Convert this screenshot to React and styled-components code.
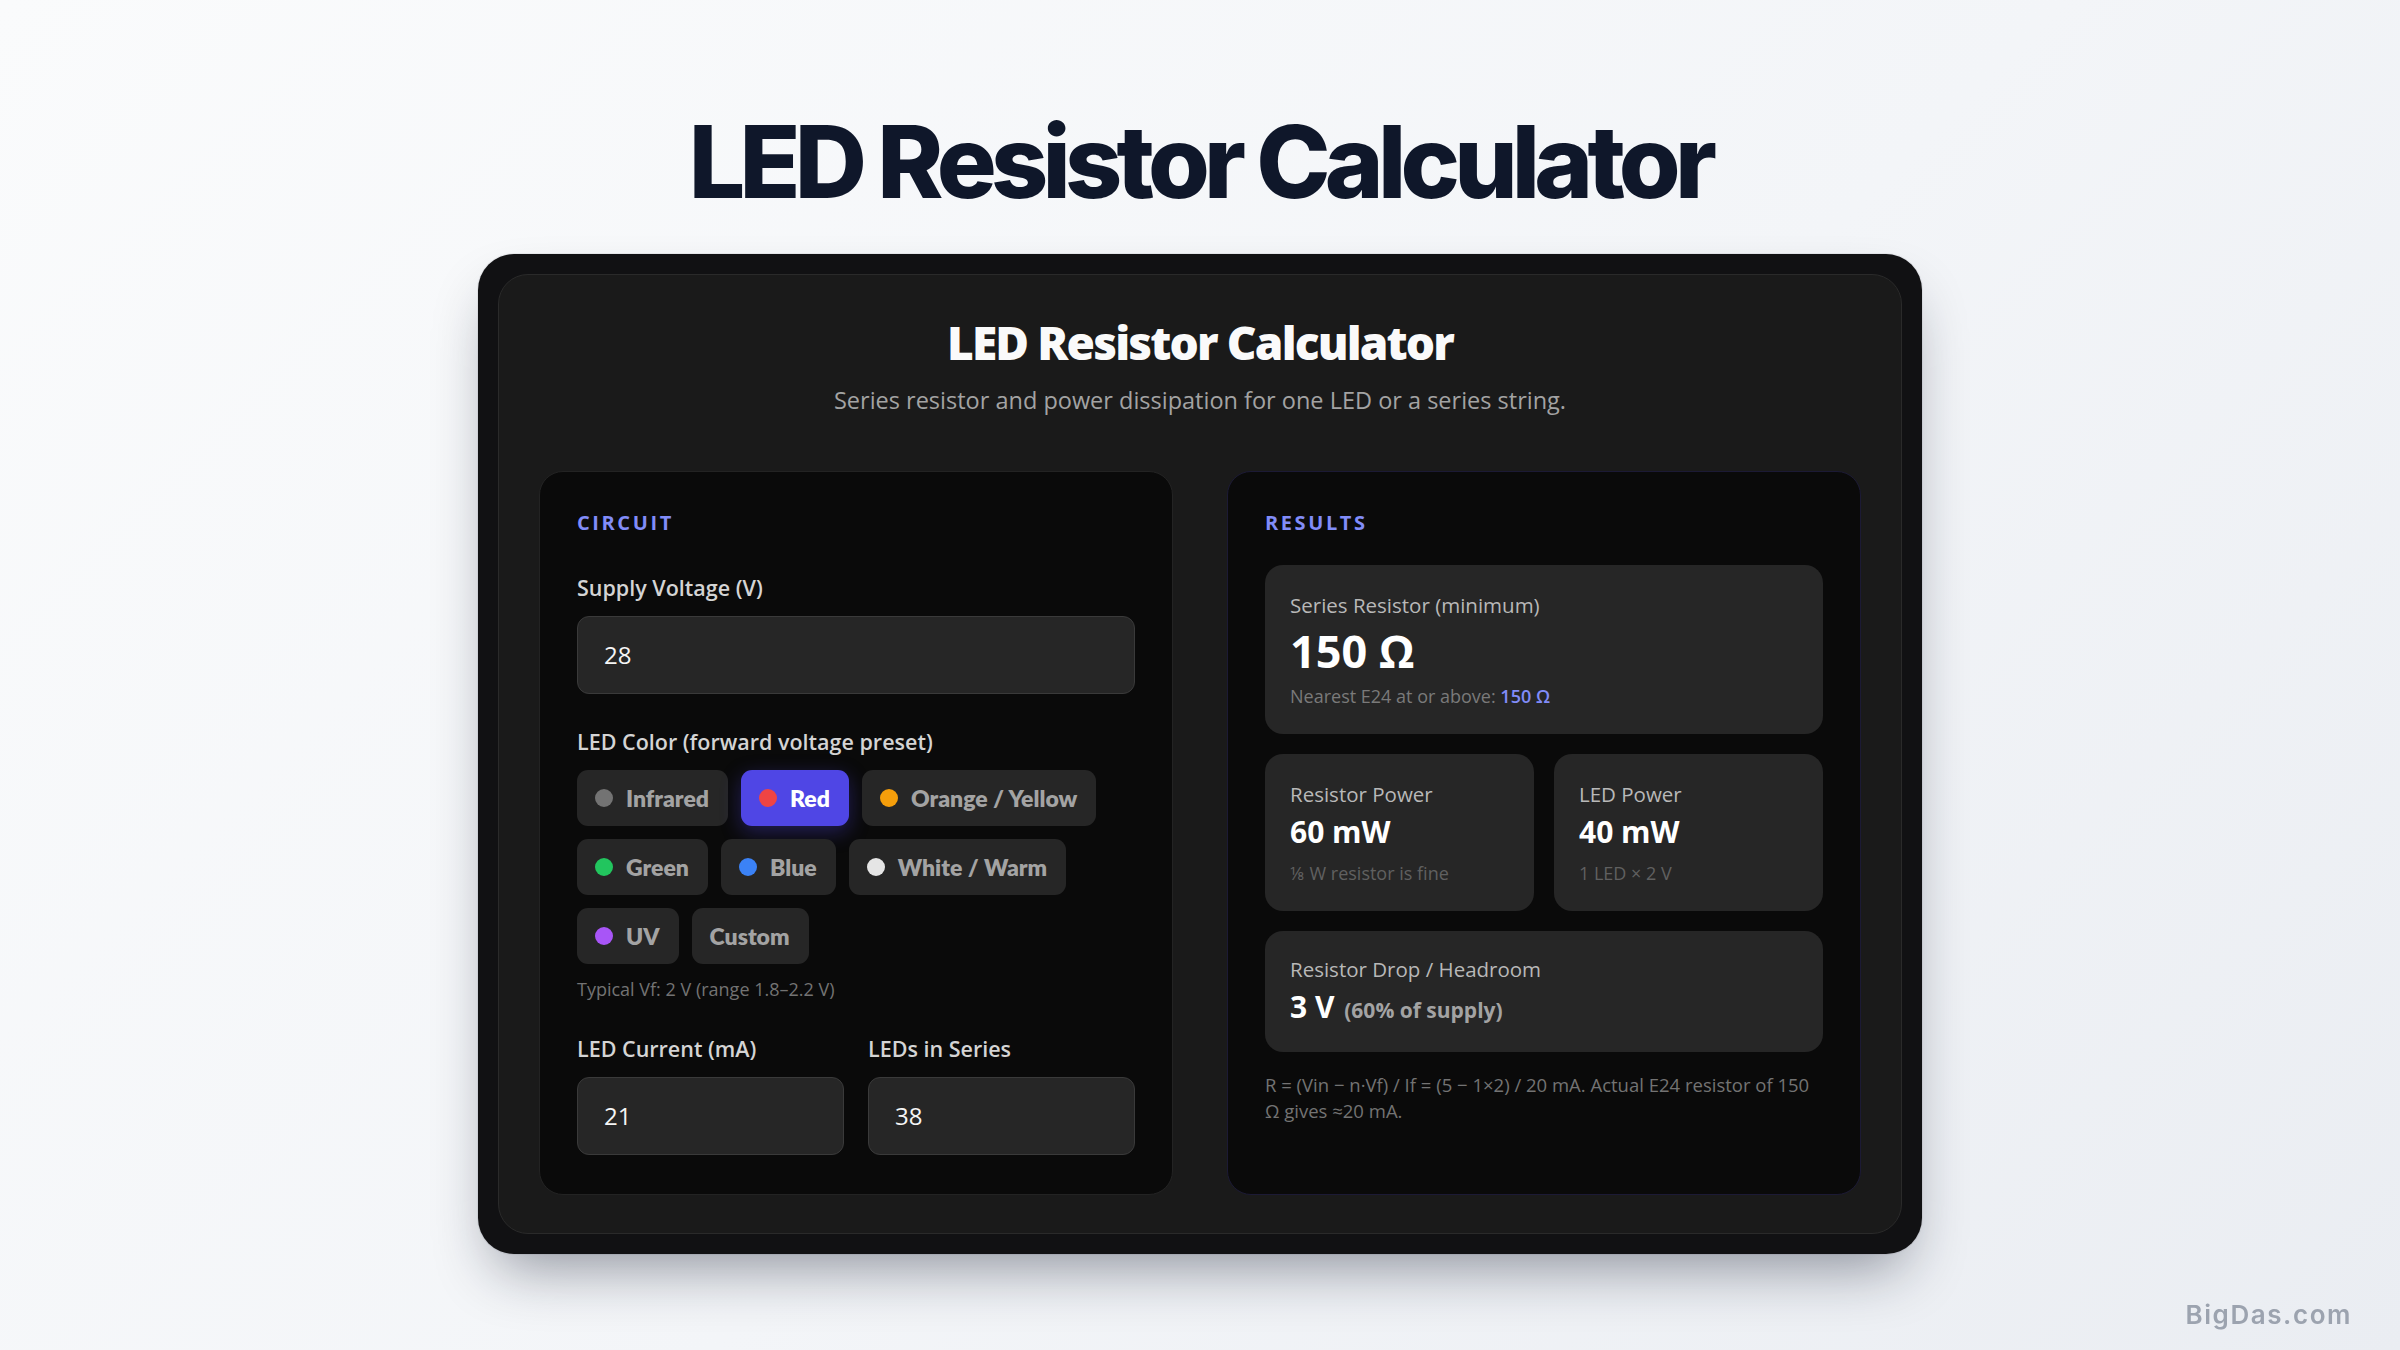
import React from "react";
import styled, { createGlobalStyle } from "styled-components";

const GlobalStyle = createGlobalStyle`
  * { box-sizing: border-box; }
  html, body { margin: 0; padding: 0; }
  body {
    min-height: 100vh;
    background: linear-gradient(135deg, #fafbfc 0%, #f3f5f8 55%, #eaedf2 100%);
    font-family: "Open Sans", "Noto Sans", sans-serif;
  }
`;

const colors = [
  { name: "Infrared", dot: "#737373" },
  { name: "Red", dot: "#ef4444", active: true },
  { name: "Orange / Yellow", dot: "#f59e0b" },
  { name: "Green", dot: "#22c55e" },
  { name: "Blue", dot: "#3b82f6" },
  { name: "White / Warm", dot: "#e5e5e5" },
  { name: "UV", dot: "#a855f7" },
  { name: "Custom" },
];

function App() {
  return (
    <Page>
      <GlobalStyle />
      <PageTitle>LED Resistor Calculator</PageTitle>

      <Frame>
        <Card>
          {/* header */}
          <CardHeader>
            <CardTitle>LED Resistor Calculator</CardTitle>
            <Subtitle>
              Series resistor and power dissipation for one LED or a series string.
            </Subtitle>
          </CardHeader>

          <Columns>
            {/* inputs */}
            <Panel>
              <SectionLabel>Circuit</SectionLabel>
              <Form>
                <Field>
                  <Label>Supply Voltage (V)</Label>
                  <Input defaultValue="28" />
                </Field>

                <Field>
                  <Label>LED Color (forward voltage preset)</Label>
                  <ChipWrap>
                    {colors.map((c) => (
                      <Chip key={c.name} $active={c.active}>
                        {c.dot && <Dot $color={c.dot} />}
                        {c.name}
                      </Chip>
                    ))}
                  </ChipWrap>
                  <Hint>Typical Vf: 2 V (range 1.8–2.2 V)</Hint>
                </Field>

                <FieldRow>
                  <Field>
                    <Label>LED Current (mA)</Label>
                    <Input defaultValue="21" />
                  </Field>
                  <Field>
                    <Label>LEDs in Series</Label>
                    <Input defaultValue="38" />
                  </Field>
                </FieldRow>
              </Form>
            </Panel>

            {/* results */}
            <Panel $accent>
              <SectionLabel>Results</SectionLabel>
              <ResultStack>
                <ResultCard>
                  <ResultLabel>Series Resistor (minimum)</ResultLabel>
                  <BigValue>150 Ω</BigValue>
                  <ResultSub $gap={10}>
                    Nearest E24 at or above: <Accent>150 Ω</Accent>
                  </ResultSub>
                </ResultCard>

                <ResultGrid>
                  <ResultCard>
                    <ResultLabel>Resistor Power</ResultLabel>
                    <Value>60 mW</Value>
                    <ResultSub $gap={12} $dim>
                      ⅛ W resistor is fine
                    </ResultSub>
                  </ResultCard>
                  <ResultCard>
                    <ResultLabel>LED Power</ResultLabel>
                    <Value>40 mW</Value>
                    <ResultSub $gap={12} $dim>
                      1 LED × 2 V
                    </ResultSub>
                  </ResultCard>
                </ResultGrid>

                <ResultCard $tall>
                  <ResultLabel>Resistor Drop / Headroom</ResultLabel>
                  <Value>
                    3 V <Small>(60% of supply)</Small>
                  </Value>
                </ResultCard>

                <Footnote>
                  R = (Vin − n·Vf) / If = (5 − 1×2) / 20 mA. Actual E24 resistor
                  of 150 Ω gives ≈20 mA.
                </Footnote>
              </ResultStack>
            </Panel>
          </Columns>
        </Card>
      </Frame>

      <Watermark>BigDas.com</Watermark>
    </Page>
  );
}

export default App;

const Page = styled.div`
  min-height: 100vh;
  display: flex;
  flex-direction: column;
  align-items: center;
  padding-top: 107px;
`;

const PageTitle = styled.h1`
  margin: 0 0 37px;
  font-family: Inter, "Open Sans", sans-serif;
  font-size: 100px;
  font-weight: 800;
  line-height: 1.1;
  letter-spacing: -0.058em;
  color: #0f172a;
`;

const Frame = styled.div`
  width: 1444px;
  padding: 20px;
  border-radius: 36px;
  background: #111113;
  box-shadow: 0 30px 60px -18px rgba(15, 23, 42, 0.45),
    0 0 0 1px rgba(15, 23, 42, 0.06);
`;

const Card = styled.div`
  padding: 40px 40px 38px;
  border-radius: 30px;
  background: #1a1a1a;
  border: 1px solid #2a2a2a;
`;

const CardHeader = styled.div`
  text-align: center;
  margin-bottom: 54px;
`;

const CardTitle = styled.h2`
  margin: 0;
  font-size: 46px;
  font-weight: 800;
  line-height: 1.2;
  letter-spacing: -0.04em;
  color: #fafafa;
`;

const Subtitle = styled.p`
  margin: 14px 0 0;
  font-size: 23.5px;
  line-height: 1.4;
  color: #a3a3a3;
`;

const Columns = styled.div`
  display: grid;
  grid-template-columns: 1fr 1fr;
  gap: 54px;
`;

const Panel = styled.section`
  padding: 39px 37px 39px;
  border-radius: 24px;
  background: #0a0a0a;
  border: 1px solid ${(p) => (p.$accent ? "#1c1a35" : "#232323")};
`;

const SectionLabel = styled.div`
  margin-bottom: 30px;
  font-size: 20px;
  font-weight: 700;
  line-height: 1.2;
  letter-spacing: 0.13em;
  text-transform: uppercase;
  color: #818cf8;
`;

const Form = styled.div`
  display: flex;
  flex-direction: column;
  gap: 35px;
  padding-top: 10px;
`;

const Field = styled.div`
  display: flex;
  flex-direction: column;
  min-width: 0;
`;

const FieldRow = styled.div`
  display: grid;
  grid-template-columns: 1fr 1fr;
  gap: 24px;
`;

const Label = styled.label`
  margin-bottom: 15px;
  font-size: 21.5px;
  font-weight: 600;
  line-height: 1.2;
  color: #d4d4d4;
`;

const Input = styled.input`
  width: 100%;
  height: 78px;
  padding: 0 26px;
  border-radius: 12px;
  border: 1.5px solid #3a3a3a;
  background: #262626;
  color: #f5f5f5;
  font-family: "Open Sans", sans-serif;
  font-size: 24px;
  outline: none;
`;

const ChipWrap = styled.div`
  display: flex;
  flex-wrap: wrap;
  gap: 13px 13px;
`;

const Chip = styled.button`
  display: inline-flex;
  align-items: center;
  gap: 13px;
  height: 56px;
  padding: 0 19px 0 18px;
  border: none;
  border-radius: 11px;
  background: ${(p) => (p.$active ? "#4f46e5" : "#262626")};
  color: ${(p) => (p.$active ? "#ffffff" : "#a3a3a3")};
  box-shadow: ${(p) =>
    p.$active ? "0 6px 20px rgba(79, 70, 229, 0.35)" : "none"};
  font-family: Lato, "Open Sans", sans-serif;
  font-size: 23px;
  font-weight: 800;
  cursor: pointer;
`;

const Dot = styled.span`
  width: 18px;
  height: 18px;
  border-radius: 50%;
  background: ${(p) => p.$color};
  flex-shrink: 0;
`;

const Hint = styled.div`
  margin-top: 14px;
  font-size: 18px;
  line-height: 1.3;
  color: #737373;
`;

const ResultStack = styled.div`
  display: flex;
  flex-direction: column;
  gap: 20px;
`;

const ResultGrid = styled.div`
  display: grid;
  grid-template-columns: 1fr 1fr;
  gap: 20px;
`;

const ResultCard = styled.div`
  padding: ${(p) => (p.$tall ? "26px 25px 27px" : "28px 25px 25px")};
  border-radius: 18px;
  background: #262626;
`;

const ResultLabel = styled.div`
  margin-bottom: 8px;
  font-size: 20.5px;
  line-height: 1.2;
  color: #b8b8b8;
`;

const BigValue = styled.div`
  font-size: 45px;
  font-weight: 700;
  line-height: 1.1;
  color: #ffffff;
`;

const Value = styled.div`
  font-size: 30px;
  font-weight: 700;
  line-height: 1.2;
  color: #ffffff;
`;

const Small = styled.span`
  margin-left: 2px;
  font-size: 21px;
  font-weight: 700;
  color: #a3a3a3;
`;

const ResultSub = styled.div`
  margin-top: ${(p) => p.$gap}px;
  font-size: 18px;
  line-height: 1.3;
  color: ${(p) => (p.$dim ? "#606060" : "#7a7a7a")};
`;

const Accent = styled.span`
  font-weight: 600;
  color: #818cf8;
`;

const Footnote = styled.p`
  margin: 0;
  font-size: 18.5px;
  line-height: 25.7px;
  color: #737373;
`;

const Watermark = styled.div`
  position: fixed;
  right: 48px;
  bottom: 20px;
  font-family: Inter, sans-serif;
  font-size: 26px;
  font-weight: 600;
  letter-spacing: 0.06em;
  color: #9ca3af;
`;
